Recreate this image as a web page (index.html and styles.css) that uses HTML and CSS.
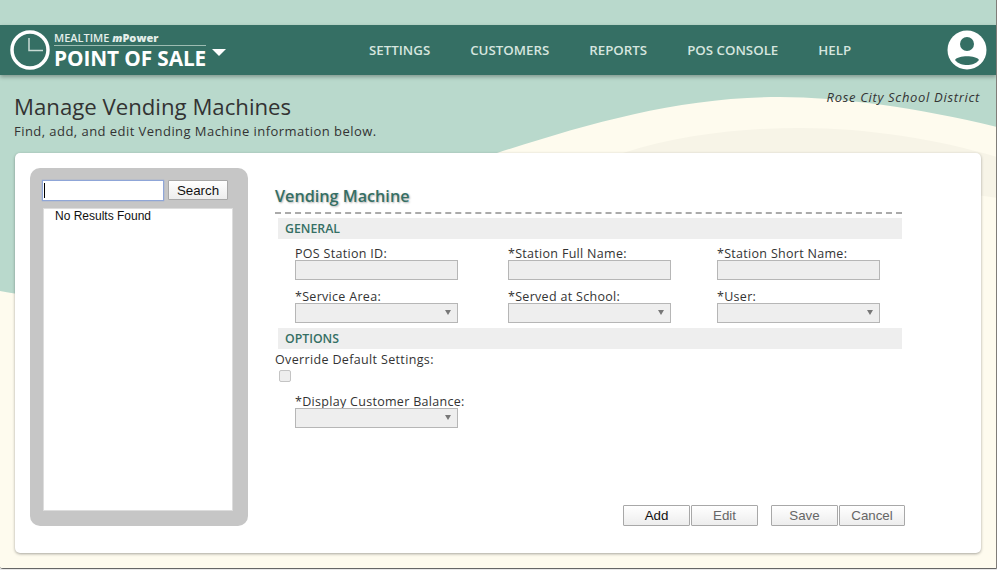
FILE: index.html
```html
<!DOCTYPE html>
<html lang="en">
<head>
<meta charset="utf-8">
<title>Manage Vending Machines</title>
<link rel="stylesheet" href="styles.css">
</head>
<body>
<svg class="bg" width="997" height="570" viewBox="0 0 997 570" aria-hidden="true">
  <rect width="997" height="570" fill="#fefbee"/>
  <path d="M0 0H997V127C920 108 840 97 780 97C680 97 590 123 497 153C300 190 130 320 0 291Z" fill="#b9d9cc"/>
  <path d="M623 153C680 135 740 128 800 128C870 128 940 140 997 157V198L800 170Z" fill="#f7f4e7"/>
</svg>
<header class="topbar">
  <div class="brand">
    <svg class="clock" width="40" height="40" viewBox="0 0 40 40" aria-hidden="true">
      <circle cx="20" cy="20" r="18" fill="none" stroke="#fff" stroke-width="3.500"/>
      <path d="M19 8V20.500H33" fill="none" stroke="#c9dcd5" stroke-width="1.500"/>
    </svg>
    <div class="brand-text">
      <div class="brand-top">MEALTIME <b><i>m</i>Power</b></div>
      <div class="brand-main">POINT OF SALE</div>
    </div>
    <span class="caret"></span>
  </div>
  <nav class="nav">
    <a>SETTINGS</a><a>CUSTOMERS</a><a>REPORTS</a><a>POS CONSOLE</a><a>HELP</a>
  </nav>
  <svg class="avatar" width="40" height="40" viewBox="0 0 40 40" aria-hidden="true">
    <circle cx="20" cy="20" r="19.500" fill="#fff"/>
    <circle cx="20" cy="14" r="7" fill="#356f64"/>
    <path d="M8 30C11 25 29 25 32 30C29 34 24 35 20 35C16 35 11 34 8 30Z" fill="#356f64"/>
  </svg>
</header>
<div class="page-head">
  <div>
    <h1>Manage Vending Machines</h1>
    <p>Find, add, and edit Vending Machine information below.</p>
  </div>
  <div class="district">Rose City School District</div>
</div>
<main class="card">
  <aside class="side">
    <div class="search">
      <input class="search-input" type="text">
      <button class="btn search-btn">Search</button>
    </div>
    <div class="results">No Results Found</div>
  </aside>
  <section class="form">
    <h2>Vending Machine</h2>
    <h3>GENERAL</h3>
    <div class="grid">
      <label class="field">POS Station ID:<span class="box"></span></label>
      <label class="field">*Station Full Name:<span class="box"></span></label>
      <label class="field">*Station Short Name:<span class="box"></span></label>
      <label class="field">*Service Area:<span class="box sel"></span></label>
      <label class="field">*Served at School:<span class="box sel"></span></label>
      <label class="field">*User:<span class="box sel"></span></label>
    </div>
    <h3>OPTIONS</h3>
    <div class="override">Override Default Settings:</div>
    <span class="check"></span>
    <label class="field balance">*Display Customer Balance:<span class="box sel"></span></label>
    <div class="actions">
      <div class="pair">
        <button class="btn act">Add</button>
        <button class="btn act off">Edit</button>
      </div>
      <div class="pair">
        <button class="btn act off">Save</button>
        <button class="btn act off narrow">Cancel</button>
      </div>
    </div>
  </section>
</main>
</body>
</html>
```
FILE: styles.css
```css
* { box-sizing: border-box; }
html { margin: 0; height: 570px; overflow: hidden; background: #e8e8e8; }
body {
  position: relative;
  margin: 0;
  width: 997px;
  height: 569px;
  overflow: hidden;
  padding-top: 25px;
  font-family: "Open Sans", sans-serif;
  color: #333;
  border-right: 1px solid #807d78;
  border-bottom: 1px solid #666;
  border-bottom-left-radius: 3px;
  background: #fefbee;
}
.bg { position: absolute; left: 0; top: 0; z-index: 0; }
.topbar, .page-head, .card { position: relative; z-index: 1; }
.topbar {
  height: 50px;
  display: flex;
  align-items: center;
  background: #356f64;
  box-shadow: 0 2px 4px rgba(0,0,0,.3);
  padding: 0 9px 0 10px;
}
.brand { display: flex; align-items: center; width: 344px; }
.clock { flex: none; }
.brand-text { margin: 1px 0 0 4px; width: 152px; color: #fff; }
.brand-top { font-size: 11px; line-height: 13px; font-weight: 600; color: #e4eeea; border-bottom: 1px solid #9dbcb2; height: 15px; white-space: nowrap; }
.brand-main { font-size: 20.800px; line-height: 23px; padding-top: 1px; font-weight: 700; letter-spacing: -.1px; white-space: nowrap; }
.caret { align-self: flex-start; margin: 19px 0 0 6px; border-left: 7px solid transparent; border-right: 7px solid transparent; border-top: 7px solid #fff; }
.nav { display: flex; flex: 1; gap: 40px; padding-left: 15px; margin-top: -1px; }
.nav a { font-size: 13.300px; font-weight: 600; color: #d5e5df; }
.avatar { flex: none; }
.page-head { display: flex; justify-content: space-between; padding: 17px 16px 0 14px; height: 78px; }
h1 { margin: 0; font-size: 22.200px; line-height: 30px; font-weight: 400; color: #333; }
.page-head p { margin: 0; font-size: 13px; line-height: 18px; letter-spacing: .45px; font-weight: 500; }
.district { font-size: 13px; line-height: 18px; font-style: italic; font-weight: 500; letter-spacing: .68px; margin-top: -4px; }
.card {
  width: 966px;
  height: 400px;
  margin-left: 15px;
  background: #fff;
  border-radius: 5px;
  box-shadow: 0 1px 3px rgba(0,0,0,.35);
  display: flex;
  padding: 15px 0 0 15px;
}
.side {
  width: 218px;
  height: 358px;
  background: #c6c6c6;
  border-radius: 10px;
  padding: 12px 15px 15px 12px;
  display: flex;
  flex-direction: column;
}
.search { position: relative; display: flex; gap: 4px; height: 21px; }
.search::before { content: ""; position: absolute; left: 2px; top: 3px; width: 1px; height: 15px; background: #000; }
.search-input { width: 122px; height: 21px; border: 1px solid #8fa6d8; box-shadow: 0 0 1px #7f9bdc; background: #fff; padding: 0 1px; outline: 0; }
.btn {
  font-family: "Liberation Sans", sans-serif;
  font-size: 13.330px;
  background: linear-gradient(#fff, #ededed);
  border: 1px solid #a8a8a8;
  border-radius: 1px;
  color: #111;
  padding: 0;
}
.search-btn { width: 60px; height: 20px; }
.results {
  margin-top: 7px;
  margin-left: 1px;
  flex: 1;
  background: #fff;
  border: 1px solid #ddd;
  padding: 0 0 0 11px;
  font-family: "Liberation Sans", sans-serif;
  font-size: 12px;
  line-height: 14px;
  color: #111;
}
.form { position: relative; width: 630px; margin-left: 27px; }
h2 { margin: 18px 0 0; height: 28px; font-size: 16.200px; line-height: 20px; font-weight: 600; color: #356f64; text-shadow: 1px 1px 2px rgba(0,0,0,.3); border-bottom: 2px dashed #aaa; width: 627px; }
h3 { margin: 4px 0 0 3px; width: 624px; height: 21px; background: #eee; font-size: 12.300px; line-height: 21px; font-weight: 600; color: #356f64; padding-left: 7px; }
.grid { display: grid; grid-template-columns: 213px 209px 163px; grid-auto-rows: 33px; row-gap: 10px; padding: 8px 0 0 20px; height: 85px; }
.field { display: block; font-size: 12.500px; line-height: 14px; letter-spacing: .3px; font-weight: 500; color: #333; }
.box { display: block; width: 163px; height: 20px; margin-top: -1px; background: #eee; border: 1px solid #b6b6b6; position: relative; }
.sel::after { content: ""; position: absolute; right: 6px; top: 6px; border-left: 3px solid transparent; border-right: 3px solid transparent; border-top: 5px solid #777; }
.override { font-size: 12.500px; line-height: 14px; letter-spacing: .35px; font-weight: 500; margin-top: 4px; }
.check { display: block; width: 12px; height: 12px; margin: 3px 0 0 4px; background: #eee; border: 1px solid #c4c4c4; border-radius: 2px; }
.balance { margin: 13px 0 0 20px; }
.actions { position: absolute; left: 348px; top: 337px; display: flex; gap: 13px; }
.pair { display: flex; gap: 1px; }
.act { width: 67px; height: 21px; }
.narrow { width: 66px; }
.off { color: #666; }
```
